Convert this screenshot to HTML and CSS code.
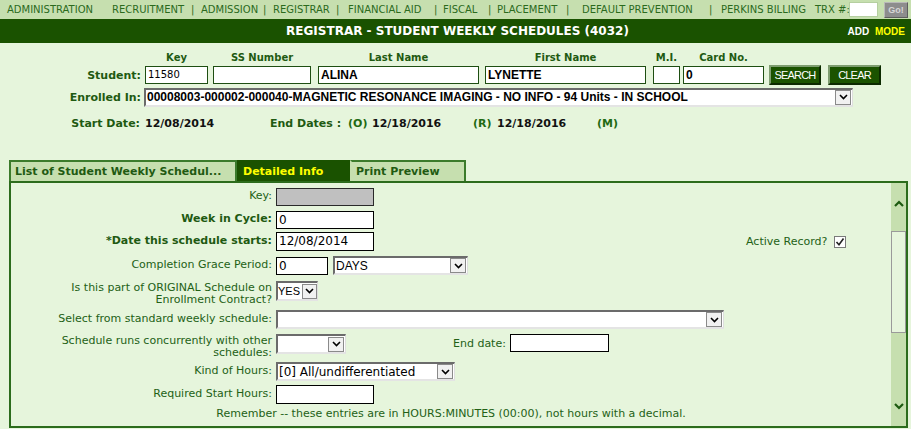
FILE: index.html
```html
<!DOCTYPE html>
<html>
<head>
<meta charset="utf-8">
<title>Registrar - Student Weekly Schedules</title>
<link rel="stylesheet" href="styles.css">
</head>
<body>
<div class="topnav">
  <span class="nv">ADMINISTRATION</span>
  <span class="nv">RECRUITMENT</span>
  <span class="sep">|</span>
  <span class="nv">ADMISSION</span>
  <span class="sep">|</span>
  <span class="nv">REGISTRAR</span>
  <span class="sep">|</span>
  <span class="nv">FINANCIAL AID</span>
  <span class="sep">|</span>
  <span class="nv">FISCAL</span>
  <span class="sep">|</span>
  <span class="nv">PLACEMENT</span>
  <span class="sep">|</span>
  <span class="nv">DEFAULT PREVENTION</span>
  <span class="sep">|</span>
  <span class="nv">PERKINS BILLING</span>
  <span class="nv">TRX #:</span>
  <span class="trx-input"></span>
  <span class="go">Go!</span>
</div>

<div class="titlebar">
  <span></span>
  <span class="title">REGISTRAR - STUDENT WEEKLY SCHEDULES (4032)</span>
  <span class="mode"><span class="mode-add">ADD</span> <span class="mode-mode">MODE</span></span>
</div>

<div class="student">
  <span></span>
  <span class="hd c-key">Key</span>
  <span class="hd c-ss">SS Number</span>
  <span class="hd c-last">Last Name</span>
  <span class="hd c-first">First Name</span>
  <span class="hd c-mi">M.I.</span>
  <span class="hd c-card">Card No.</span>
  <span></span>
  <span></span>

  <span class="slbl">Student:</span>
  <span class="sin c-key">11580</span>
  <span class="sin c-ss"></span>
  <span class="sin c-last bold">ALINA</span>
  <span class="sin c-first bold">LYNETTE</span>
  <span class="sin c-mi"></span>
  <span class="sin c-card bold">0</span>
  <span class="btn c-search">SEARCH</span>
  <span class="btn c-clear">CLEAR</span>

  <span class="slbl">Enrolled In:</span>
  <div class="sel enrolled">
    <span class="sel-text">00008003-000002-000040-MAGNETIC RESONANCE IMAGING - NO INFO - 94 Units - IN SCHOOL</span>
    <span class="sel-arrow"><svg width="9" height="6" viewBox="0 0 9 6"><polyline points="1,1 4.5,4.5 8,1" fill="none" stroke="#000" stroke-width="1.6"/></svg></span>
  </div>
</div>

<div class="dates">
  <span class="dlbl">Start Date:</span>
  <span class="dval">12/08/2014</span>
  <span class="dlbl2">End Dates :</span>
  <span class="dtag">(O)</span>
  <span class="dval2">12/18/2016</span>
  <span class="dtag">(R)</span>
  <span class="dval2">12/18/2016</span>
  <span class="dtag">(M)</span>
</div>

<div class="tabs">
  <span class="tab tab-list">List of Student Weekly Schedul...</span>
  <span class="tab tab-active">Detailed Info</span>
  <span class="tab tab-print">Print Preview</span>
</div>

<div class="panel">
  <div class="form">
    <span class="lbl">Key:</span>
    <div class="ctl"><span class="inp key-inp"></span></div>

    <span class="lbl b">Week in Cycle:</span>
    <div class="ctl"><span class="inp w98">0</span></div>

    <span class="lbl b">*Date this schedule starts:</span>
    <div class="ctl">
      <span class="inp w98 h19">12/08/2014</span>
      <span class="active">Active Record?</span>
      <span class="chk"><svg width="10" height="10" viewBox="0 0 10 10"><polyline points="1.5,5 4,7.8 8.5,1.5" fill="none" stroke="#222" stroke-width="1.6"/></svg></span>
    </div>

    <span class="lbl">Completion Grace Period:</span>
    <div class="ctl">
      <span class="inp w52">0</span>
      <div class="sel days">
        <span class="sel-text arial">DAYS</span>
        <span class="sel-arrow"><svg width="9" height="6" viewBox="0 0 9 6"><polyline points="1,1 4.5,4.5 8,1" fill="none" stroke="#000" stroke-width="1.6"/></svg></span>
      </div>
    </div>

    <span class="lbl two">Is this part of ORIGINAL Schedule on<br>Enrollment Contract?</span>
    <div class="ctl top">
      <div class="sel yes">
        <span class="sel-text arial">YES</span>
        <span class="sel-arrow"><svg width="9" height="6" viewBox="0 0 9 6"><polyline points="1,1 4.5,4.5 8,1" fill="none" stroke="#000" stroke-width="1.6"/></svg></span>
      </div>
    </div>

    <span class="lbl">Select from standard weekly schedule:</span>
    <div class="ctl">
      <div class="sel std">
        <span class="sel-text"></span>
        <span class="sel-arrow"><svg width="9" height="6" viewBox="0 0 9 6"><polyline points="1,1 4.5,4.5 8,1" fill="none" stroke="#000" stroke-width="1.6"/></svg></span>
      </div>
    </div>

    <span class="lbl two">Schedule runs concurrently with other<br>schedules:</span>
    <div class="ctl top">
      <div class="sel conc">
        <span class="sel-text"></span>
        <span class="sel-arrow"><svg width="9" height="6" viewBox="0 0 9 6"><polyline points="1,1 4.5,4.5 8,1" fill="none" stroke="#000" stroke-width="1.6"/></svg></span>
      </div>
      <span class="endlbl">End date:</span>
      <span class="inp w99"></span>
    </div>

    <span class="lbl">Kind of Hours:</span>
    <div class="ctl">
      <div class="sel kind">
        <span class="sel-text">[0] All/undifferentiated</span>
        <span class="sel-arrow"><svg width="9" height="6" viewBox="0 0 9 6"><polyline points="1,1 4.5,4.5 8,1" fill="none" stroke="#000" stroke-width="1.6"/></svg></span>
      </div>
    </div>

    <span class="lbl">Required Start Hours:</span>
    <div class="ctl"><span class="inp w98 h19"></span></div>

    <p class="note">Remember -- these entries are in HOURS:MINUTES (00:00), not hours with a decimal.</p>
  </div>
  <div class="scrollbar">
    <span class="sb-btn"><svg width="10" height="7" viewBox="0 0 10 7"><polyline points="1,6 5,2 9,6" fill="none" stroke="#1d5a10" stroke-width="2.2"/></svg></span>
    <span class="sb-thumb"></span>
    <span class="sb-track"></span>
    <span class="sb-btn"><svg width="10" height="7" viewBox="0 0 10 7"><polyline points="1,1 5,5 9,1" fill="none" stroke="#1d5a10" stroke-width="2.2"/></svg></span>
  </div>
</div>
</body>
</html>
```

FILE: styles.css
```css
* { box-sizing: border-box; }

body {
  margin: 0;
  background: #e6f5dc;
  font-family: "DejaVu Sans", Verdana, sans-serif;
  font-size: 11px;
  color: #236116;
}

/* ---------- top navigation ---------- */
.topnav {
  display: grid;
  grid-template-columns: 105px 78px 11px 61px 11px 62px 13px 85px 10px 44px 10px 68px 17px 126px 13px 94px 34px 35px 24px;
  align-items: center;
  height: 19px;
  padding-left: 7px;
  background: #c6dfaf;
  color: #2b6a1d;
  font-size: 10px;
  white-space: nowrap;
}
.sep { padding-left: 1px; }
.trx-input {
  width: 29px;
  height: 15px;
  background: #fff;
  border: 1px solid #b5cfa0;
}
.go {
  width: 24px;
  height: 16px;
  background: #8d8d8d;
  border: 1px solid;
  border-color: #b9b9b9 #5e5e5e #5e5e5e #b9b9b9;
  color: #d6d6d6;
  font-family: "Liberation Sans", Arial, sans-serif;
  font-weight: bold;
  font-size: 9px;
  line-height: 14px;
  text-align: center;
}

/* ---------- title bar ---------- */
.titlebar {
  display: grid;
  grid-template-columns: 1fr auto 1fr;
  align-items: center;
  height: 24px;
  background: #1a5200;
}
.title {
  color: #fff;
  font-weight: bold;
  font-size: 12px;
  padding-left: 4px;
}
.mode {
  justify-self: end;
  padding-right: 6px;
  font-family: "Liberation Sans", Arial, sans-serif;
  font-weight: bold;
  font-size: 10px;
}
.mode-add { color: #fff; margin-right: 3px; }
.mode-mode { color: #ffff00; }

/* ---------- student block ---------- */
.student {
  display: grid;
  grid-template-columns: 141px 67px 103px 168px 167px 34px 84px 57px 60px;
  grid-template-rows: 14px 22px 22px;
  align-items: center;
  margin-top: 7px;
}
.student > * { justify-self: end; }
.hd {
  text-align: center;
  font-weight: bold;
  font-size: 10px;
  color: #1f5a12;
}
.slbl {
  font-weight: bold;
  color: #1f5a12;
}
.c-key { width: 63px; }
.c-ss { width: 98px; }
.c-last { width: 161px; }
.c-first { width: 161px; }
.c-mi { width: 27px; }
.c-card { width: 81px; }
.c-search { width: 52px; }
.c-clear { width: 53px; }

.sin {
  height: 18px;
  background: #fff;
  border: 1px solid #1e4e12;
  color: #000;
  font-size: 10px;
  line-height: 16px;
  padding-left: 2px;
}
.sin.bold {
  font-family: "Liberation Sans", Arial, sans-serif;
  font-weight: bold;
  font-size: 12px;
}
.btn {
  height: 20px;
  background: #1b5300;
  border: 2px solid;
  border-color: #7e9d70 #0c2a00 #0c2a00 #7e9d70;
  color: #fff;
  font-family: "Liberation Sans", Arial, sans-serif;
  font-size: 11px;
  letter-spacing: -0.8px;
  line-height: 16px;
  text-align: center;
}

/* ---------- custom selects ---------- */
.sel {
  display: flex;
  align-items: center;
  height: 19px;
  background: #fff;
  border-style: solid;
  border-width: 2px 1px 2px 2px;
  border-color: #6b6b6b #dedede #e4e4e4 #6b6b6b;
}
.sel-text {
  flex: 1;
  padding-left: 1px;
  white-space: nowrap;
  overflow: hidden;
  color: #000;
  font-size: 12px;
}
.sel-text.arial { font-family: "Liberation Sans", Arial, sans-serif; }
.sel-arrow {
  display: flex;
  align-items: center;
  justify-content: center;
  flex: 0 0 16px;
  height: 15px;
  margin-right: 1px;
  background: #f1f1f1;
  border: 1px solid #8a8a8a;
}
.enrolled {
  grid-column: 2 / -1;
  justify-self: start;
  width: 709px;
  margin-left: 3px;
}
.enrolled .sel-text {
  font-family: "Liberation Sans", Arial, sans-serif;
  font-weight: bold;
  font-size: 12px;
}

/* ---------- dates ---------- */
.dates {
  display: grid;
  grid-template-columns: 141px 129px 78px 24px 101px 24px 100px auto;
  align-items: center;
  height: 14px;
  margin-top: 8px;
  font-weight: bold;
}
.dlbl { text-align: right; padding-right: 1px; color: #1f5a12; }
.dval { padding-left: 4px; color: #111; }
.dlbl2 { color: #1f5a12; }
.dtag { color: #1f6a12; }
.dval2 { color: #111; }

/* ---------- tabs ---------- */
.tabs {
  display: flex;
  height: 21px;
  margin: 30px 0 0 9px;
}
.tab {
  height: 21px;
  padding: 0 0 0 4px;
  font-weight: bold;
  line-height: 19px;
  color: #1f5a12;
  background: #c6dfaf;
  border: 2px solid #3b7b2b;
  border-bottom: none;
}
.tab-list { width: 228px; }
.tab-active {
  width: 113px;
  color: #ffff00;
  background: #1a5200;
  border-color: #1a5200;
}
.tab-print { width: 116px; border-left-color: #c6dfaf; }

/* ---------- panel ---------- */
.panel {
  display: flex;
  width: 899px;
  height: 247px;
  margin-left: 9px;
  border: 2px solid #2c6c1c;
}
.form {
  flex: 1;
  display: grid;
  grid-template-columns: 261px 1fr;
  grid-template-rows: 23px 22px 24px 25px 29px 24px 28px 23px 20px auto;
  column-gap: 4px;
  align-items: start;
  padding-top: 4px;
}
.lbl {
  text-align: right;
  line-height: 18px;
  white-space: nowrap;
}
.lbl.b { font-weight: bold; color: #1f5a12; }
.lbl.two { line-height: 11.5px; padding-top: 1px; }
.ctl {
  display: flex;
  align-items: center;
  height: 19px;
}
.ctl.top { align-items: flex-start; height: auto; }
.inp {
  height: 18px;
  background: #fff;
  border: 1px solid #000;
  color: #000;
  font-size: 12px;
  line-height: 16px;
  padding-left: 2px;
  white-space: nowrap;
}
.inp.h19 { height: 19px; }
.key-inp { width: 98px; background: #c0c0c0; border-color: #2a2a2a; }
.w98 { width: 98px; }
.w99 { width: 99px; }
.w52 { width: 52px; }
.days { width: 135px; margin-left: 5px; }
.yes { width: 42px; height: 20px; }
.yes .sel-text { font-size: 11px; padding-left: 0; }
.yes .sel-arrow { flex-basis: 15px; margin-right: 0; }
.std { width: 448px; }
.conc { width: 70px; height: 20px; }
.kind { width: 179px; }
.active { margin-left: 372px; }
.chk {
  display: flex;
  align-items: center;
  justify-content: center;
  width: 12px;
  height: 12px;
  margin-left: 7px;
  background: #fff;
  border: 1px solid #7a7a7a;
}
.endlbl { margin: 1px 4px 0 107px; line-height: 18px; }
.note {
  grid-column: 1 / -1;
  margin: 2px 0 0;
  text-align: center;
  line-height: 14px;
}

/* ---------- scrollbar ---------- */
.scrollbar {
  display: flex;
  flex-direction: column;
  width: 15px;
  background: #c6dfaf;
}
.sb-btn {
  display: flex;
  align-items: center;
  justify-content: center;
  height: 40px;
}
.sb-thumb {
  height: 102px;
  margin-top: 8px;
  background: #e6f5dc;
  border: 1px solid #9a9a9a;
}
.sb-track { flex: 1; }
```
